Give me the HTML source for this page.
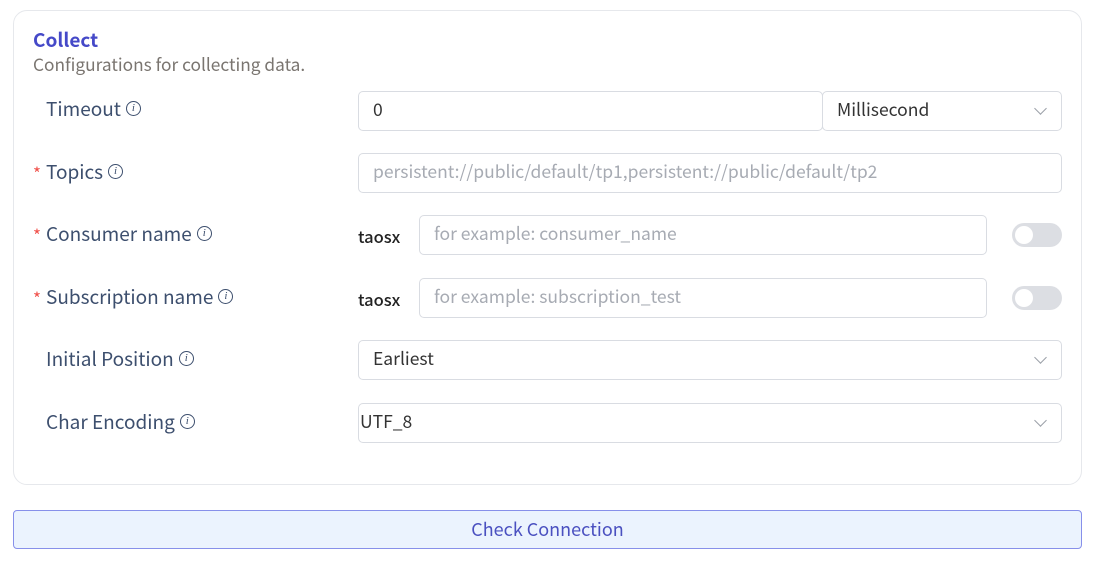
<!DOCTYPE html>
<html><head><meta charset="utf-8"><style>
*{box-sizing:border-box;margin:0;padding:0}
body{width:1097px;height:561px;background:#fff;font-family:"Noto Sans CJK SC","Liberation Sans",sans-serif;position:relative;overflow:hidden}
.card{position:absolute;left:13px;top:10px;width:1069px;height:475px;border:1px solid #e6e8ec;border-radius:14px}
.abs{position:absolute;white-space:nowrap}
.title{left:33px;top:27px;font-size:19px;font-weight:700;color:#4549c8;line-height:26px}
.sub{left:33px;top:53px;font-size:17.3px;color:#7a7570;line-height:22px}
.lbl{left:46px;font-size:19px;color:#3d4f6e;line-height:24px}
.star{position:absolute;left:-13px;top:1px;color:#f0504a;font-size:17px}
.info{display:inline-block;width:15px;height:15px;border:1.2px solid #3d4f6e;border-radius:50%;font-size:11px;line-height:13px;text-align:center;font-style:italic;font-family:"Liberation Serif",serif;vertical-align:5px;margin-left:5px}
.inp{position:absolute;height:40px;border:1px solid #d9dce2;border-radius:5px;font-size:17.5px;line-height:36px;padding-left:14px;color:#333}
.ph{color:#a7abb3}
.chev{position:absolute;right:16px;top:12px;width:9px;height:9px;border-right:1.2px solid #9aa0a8;border-bottom:1.2px solid #9aa0a8;transform:rotate(45deg)}
.tg{position:absolute;left:1012px;width:50px;height:24px;border-radius:12px;background:#dcdee3}
.tg::after{content:"";position:absolute;left:3px;top:3px;width:18px;height:18px;border-radius:50%;background:#fff}
.tx{left:358px;font-size:16.5px;color:#222;font-weight:500}
.btn{position:absolute;left:13px;top:510px;width:1069px;height:39px;border:1px solid #8790ea;border-radius:4px;background:#ebf3fe;color:#4a50c0;font-size:18px;text-align:center;line-height:37px}
</style></head><body>
<div class="card"></div>
<div class="abs title">Collect</div>
<div class="abs sub">Configurations for collecting data.</div>

<div class="abs lbl" style="top:97px">Timeout<span class="info">i</span></div>
<div class="inp" style="left:358px;top:91px;width:465px">0</div>
<div class="inp" style="left:822px;top:91px;width:240px;color:#333">Millisecond<span class="chev"></span></div>

<div class="abs lbl" style="top:160px"><span class="star">*</span>Topics<span class="info">i</span></div>
<div class="inp ph" style="left:358px;top:153px;width:704px">persistent://public/default/tp1,persistent://public/default/tp2</div>

<div class="abs lbl" style="top:222px"><span class="star">*</span>Consumer name<span class="info">i</span></div>
<div class="abs tx" style="top:224px">taosx</div>
<div class="inp ph" style="left:419px;top:215px;width:568px">for example: consumer_name</div>
<div class="tg" style="top:223px"></div>

<div class="abs lbl" style="top:285px"><span class="star">*</span>Subscription name<span class="info">i</span></div>
<div class="abs tx" style="top:287px">taosx</div>
<div class="inp ph" style="left:419px;top:278px;width:568px">for example: subscription_test</div>
<div class="tg" style="top:286px"></div>

<div class="abs lbl" style="top:347px">Initial Position<span class="info">i</span></div>
<div class="inp" style="left:358px;top:340px;width:704px">Earliest<span class="chev"></span></div>

<div class="abs lbl" style="top:410px">Char Encoding<span class="info">i</span></div>
<div class="inp" style="left:358px;top:403px;width:704px;padding-left:1px">UTF_8<span class="chev"></span></div>

<div class="btn">Check Connection</div>
</body></html>
